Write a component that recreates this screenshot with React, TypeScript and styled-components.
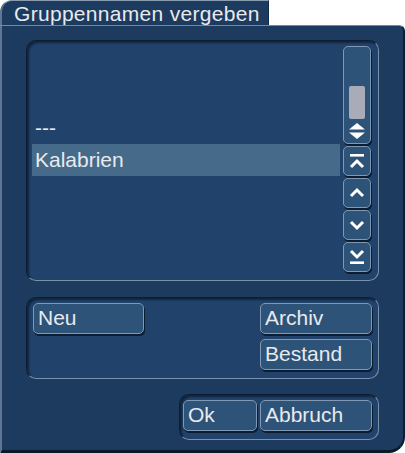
import React from 'react'
import styled, { createGlobalStyle } from 'styled-components'

const GlobalStyle = createGlobalStyle`
  html, body {
    margin: 0;
    padding: 0;
    background: #ffffff;
  }
  * {
    box-sizing: border-box;
  }
`

const Window = styled.div`
  width: 405px;
  height: 453px;
  display: flex;
  flex-direction: column;
  font-family: 'Liberation Sans', Arial, sans-serif;
  color: #e8eaee;
  background: #ffffff;
`

const Header = styled.div`
  display: flex;
  height: 25px;
`

const Tab = styled.div`
  width: 269px;
  background: #1d3a5f;
  border-top-left-radius: 12px;
  border-top: 1px solid #8a9cb2;
  border-left: 2px solid #5f7795;
  border-right: 1px solid #13294a;
  font-size: 21px;
  line-height: 25px;
  letter-spacing: 0.3px;
  padding-left: 12px;
  white-space: nowrap;
`

const Panel = styled.div`
  flex: 1;
  display: flex;
  flex-direction: column;
  background: #1d3a5f;
  border-top: 1px solid #6f88a6;
  border-left: 2px solid #5f7795;
  border-right: 2px solid #0e1d31;
  border-bottom: 3px solid #0b1828;
  border-radius: 0 6px 16px 0;
  padding: 14px 24px 0 24px;
`

const Sunken = styled.div`
  border: 1px solid;
  border-color: #0c1e35 #7a91ac #7a91ac #0c1e35;
  border-radius: 10px;
  background: #21426a;
  box-shadow: inset 2px 2px 2px rgba(0, 0, 0, 0.45);
`

const ListBox = styled(Sunken)`
  height: 241px;
  display: flex;
`

const List = styled.div`
  flex: 1;
  padding: 71px 0 0 5px;
`

const Row = styled.div<{ $selected?: boolean }>`
  height: 32px;
  line-height: 32px;
  font-size: 21px;
  padding-left: 3px;
  background: ${p => (p.$selected ? '#466a8a' : 'transparent')};
`

const ScrollBar = styled.div`
  width: 38px;
  display: flex;
  flex-direction: column;
  gap: 2px;
  padding: 5px 6px 0 3px;
`

const Button = styled.div<{ $w?: number }>`
  width: ${p => (p.$w ? `${p.$w}px` : 'auto')};
  height: 31px;
  background: #2e5378;
  border: 1px solid #8098b3;
  border-radius: 5px;
  box-shadow: 1px 2px 0 #0d1d31;
  font-size: 21px;
  line-height: 28px;
  padding-left: 4px;
  white-space: nowrap;
`

const ScrollButton = styled(Button)`
  width: 28px;
  height: 30px;
  padding: 0;
  display: flex;
  align-items: center;
  justify-content: center;
`

const Track = styled(ScrollButton)`
  height: 98px;
  flex-direction: column;
  justify-content: flex-start;
  padding-top: 39px;
`

const Thumb = styled.div`
  width: 16px;
  height: 33px;
  background: #a9abb6;
  border-radius: 2px;
`

const Group = styled(Sunken)`
  margin-top: 16px;
  height: 82px;
  display: grid;
  grid-template-columns: 111px 1fr 112px;
  grid-template-rows: 31px 31px;
  row-gap: 5px;
  padding: 5px 6px;
`

const FooterGroup = styled(Sunken)`
  margin-top: 15px;
  margin-left: auto;
  width: 200px;
  height: 46px;
  display: flex;
  gap: 3px;
  padding: 5px 6px 0 3px;
`

const Cell = styled.div<{ $col: number; $row: number }>`
  grid-column: ${p => p.$col};
  grid-row: ${p => p.$row};
`

const Icon = ({ d, bar }: { d: string; bar?: number }) => (
  <svg width="18" height="18" viewBox="0 0 18 18">
    <path d={d} fill="none" stroke="#ffffff" strokeWidth="3" strokeLinecap="butt" strokeLinejoin="miter" />
    {bar !== undefined && <rect x="2" y={bar} width="14" height="2.6" fill="#ffffff" />}
  </svg>
)

const DoubleArrow = () => (
  <svg width="18" height="18" viewBox="0 0 18 18" style={{ marginTop: 3 }}>
    <path d="M9 1 L17 7.5 L1 7.5 Z" fill="#ffffff" />
    <path d="M1 10.5 L17 10.5 L9 17 Z" fill="#ffffff" />
  </svg>
)

export default function App() {
  return (
    <>
      <GlobalStyle />
      <Window>
        <Header>
          <Tab>Gruppennamen vergeben</Tab>
        </Header>
        <Panel>
          <ListBox>
            <List>
              <Row>---</Row>
              <Row $selected>Kalabrien</Row>
            </List>
            <ScrollBar>
              <Track>
                <Thumb />
                <DoubleArrow />
              </Track>
              <ScrollButton>
                <Icon d="M3 15 L9 9 L15 15" bar={2} />
              </ScrollButton>
              <ScrollButton>
                <Icon d="M3 12 L9 6 L15 12" />
              </ScrollButton>
              <ScrollButton>
                <Icon d="M3 6 L9 12 L15 6" />
              </ScrollButton>
              <ScrollButton>
                <Icon d="M3 3 L9 9 L15 3" bar={13.4} />
              </ScrollButton>
            </ScrollBar>
          </ListBox>
          <Group>
            <Cell $col={1} $row={1}>
              <Button>Neu</Button>
            </Cell>
            <Cell $col={3} $row={1}>
              <Button>Archiv</Button>
            </Cell>
            <Cell $col={3} $row={2}>
              <Button>Bestand</Button>
            </Cell>
          </Group>
          <FooterGroup>
            <Button $w={74}>Ok</Button>
            <Button $w={112}>Abbruch</Button>
          </FooterGroup>
        </Panel>
      </Window>
    </>
  )
}
